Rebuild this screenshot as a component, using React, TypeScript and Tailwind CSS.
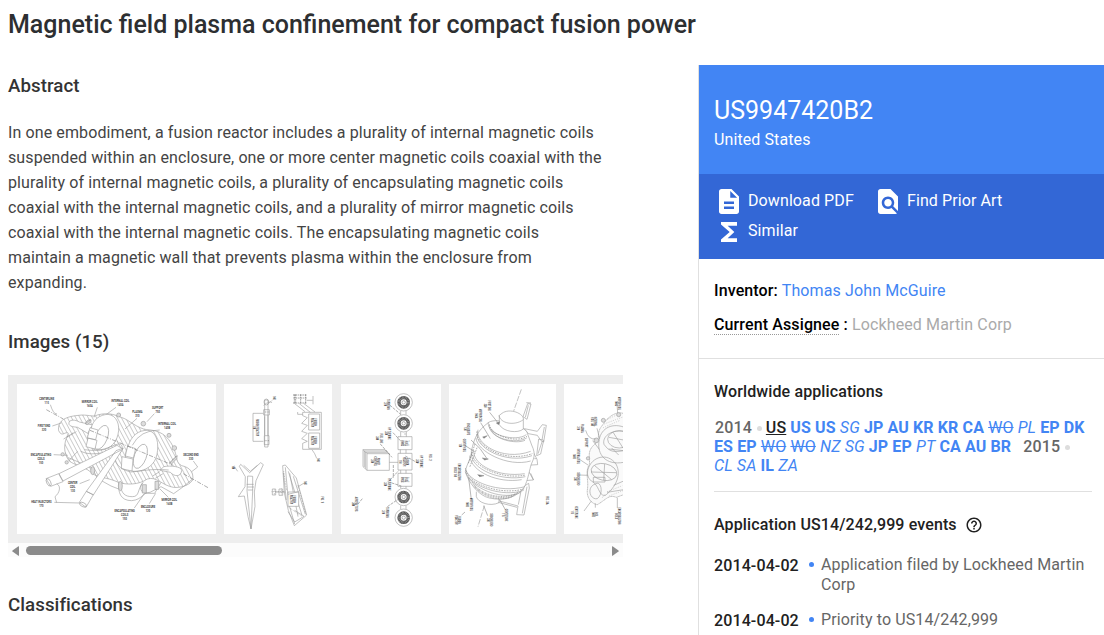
import React from "react";
import { MdHelpOutline } from "react-icons/md";

type Label = [number, number, ...string[]];

// small condensed callouts, upright or turned a quarter like the scanned sheets
function Labels({ items, turned = false, size = 12 }: { items: Label[]; turned?: boolean; size?: number }) {
  return (
    <g fill="#333" stroke="none" fontSize={size} fontWeight="600" textAnchor="middle">
      {items.map(([x, y, ...lines], i) => (
        <g key={i} transform={`translate(${x} ${y})${turned ? " rotate(90)" : ""} scale(0.64 1)`}>
          {lines.map((line, n) => (
            <text key={n} y={n * size + 4}>{line}</text>
          ))}
        </g>
      ))}
    </g>
  );
}

function Sheet({ viewBox, className, children }: { viewBox: string; className: string; children: React.ReactNode }) {
  return (
    <div className={`h-[150px] shrink-0 bg-white tracking-normal ${className}`}>
      <svg viewBox={viewBox} className="h-full w-full" preserveAspectRatio="none" fill="none" stroke="#999" strokeWidth="1.8">
        {children}
      </svg>
    </div>
  );
}

function CutawayFigure() {
  return (
    <Sheet viewBox="51 42 597 450" className="w-[199px]">
      <defs>
        <pattern id="hatch" width="11" height="11" patternUnits="userSpaceOnUse" patternTransform="rotate(-28)">
          <path d="M1 0V11" stroke="#aaa" strokeWidth="2" />
        </pattern>
      </defs>
      <path
        fill="url(#hatch)"
        d="M176 182C172 156 190 140 236 136C262 132 280 143 292 135C330 125 350 137 374 146C400 160 420 180 452 180C490 184 512 208 524 242C532 264 528 278 545 287C570 292 582 308 578 330C566 348 540 354 520 352C485 346 470 318 442 327C416 345 380 345 355 337C320 320 290 325 272 306C246 285 224 287 207 272C190 250 190 220 205 190C196 182 186 204 176 182Z"
      />
      <path fill="#fff" d="M207 163C204 150 221 146 238 156L278 165L263 190L233 172C220 170 212 171 207 163ZM491 290C510 286 546 289 545 302C542 322 523 320 511 307L480 301Z" />
      <g fill="#fff">
        <path d="M273 178C278 148 300 134 324 133C350 136 361 164 354 193C348 222 323 246 286 239C260 232 256 202 273 178Z" />
        <path d="M384 230C394 196 416 180 444 181C472 187 477 221 471 253C465 286 435 306 399 304C374 295 370 254 384 230Z" />
      </g>
      <ellipse cx="304" cy="202" rx="18" ry="38" transform="rotate(22 304 202)" />
      <ellipse cx="421" cy="259" rx="18" ry="38" transform="rotate(20 421 259)" />
      <path fill="#fff" d="M270 173L294 180L287 209L262 204ZM264 204L291 211L285 237L258 230ZM383 228L407 236L400 264L376 258ZM366 260L399 267L396 303L364 296Z" />
      <path d="M242 244C285 265 335 234 354 247C334 271 354 296 392 306C420 304 454 295 506 300M253 239C309 247 323 231 354 222C370 220 371 240 356 254M207 272L233 244M205 263L277 294L292 325L333 348L356 357" />
      <path fill="#fff" d="M138 326L176 311L189 335L152 349ZM177 311L351 226L369 237L189 333ZM238 397L259 364L280 374L258 412ZM259 364L348 242L370 234L280 375Z" />
      <ellipse cx="146" cy="337" rx="6" ry="12" transform="rotate(-26 146 337)" />
      <ellipse cx="249" cy="404" rx="11" ry="6" transform="rotate(26 249 404)" />
      <path strokeDasharray="13 4 3 4" d="M139 119L190 147M270 181L520 286M550 311L624 353" stroke="#777" />
      <path d="M356 337C354 367 361 392 395 392C428 389 428 366 450 367L483 350L521 371L550 350L574 330M360 342C364 371 375 380 397 380C420 380 411 358 429 338M429 337C416 349 422 371 440 370L464 370L483 337M458 318L479 305M466 325L489 311" />
      <path stroke="#999" d="M151 104Q160 133 171 132M292 112L282 142M348 112L322 131M411 145L375 177M463 131L441 155M479 180Q420 180 397 226M157 168L184 159M161 254L203 256M170 398L165 380C178 370 185 349 170 341M163 397L239 399M239 341L269 329M403 414L433 371M448 401L467 370M505 382L479 356M580 273L593 291L575 305" />
      <g fill="#ddd">
        <circle cx="356" cy="135" r="6" /><circle cx="507" cy="196" r="6" /><circle cx="523" cy="234" r="7" />
        <circle cx="430" cy="161" r="7" /><circle cx="188" cy="253" r="5" /><circle cx="200" cy="277" r="5" />
        <ellipse cx="265" cy="156" rx="5" ry="10" transform="rotate(50 265 156)" /><ellipse cx="278" cy="302" rx="6" ry="12" />
        <ellipse cx="361" cy="348" rx="6" ry="14" /><path d="M427 344h12v25h-12zM465 334h11v24h-11zM510 278L532 257L530 266L515 282Z" />
      </g>
      <path stroke="#777" strokeDasharray="4 2" d="M191 207L222 187M202 202L229 185M257 160L273 149M508 279L529 257" />
      <Labels items={[
        [140, 86, "CENTERLINE", "115"], [269, 96, "MIRROR COIL", "160A"], [361, 91, "INTERNAL COIL", "140A"],
        [412, 126, "PLASMA", "310"], [473, 113, "SUPPORT", "750"], [501, 160, "INTERNAL COIL", "140B"],
        [132, 166, "FIRST END", "320"], [123, 253, "ENCAPSULATING", "COILS", "150"], [573, 253, "SECOND END", "330"],
        [218, 339, "CENTER", "COIL", "130"], [124, 395, "HEAT INJECTORS", "170"], [374, 421, "ENCAPSULATING", "COILS", "150"],
        [444, 409, "ENCLOSURE", "120"], [508, 388, "MIRROR COIL", "160B"],
      ]} />
    </Sheet>
  );
}

function VehiclesFigure() {
  return (
    <Sheet viewBox="27 42 324 450" className="mr-px w-[108px]">
      <path d="M145 130H114V214H145M149 90H159V231H149ZM146 119H163V135H146ZM148 197H162V224H148ZM149 139V195M159 136V197" />
      <path strokeDasharray="3 2" stroke="#777" d="M146 106Q165 90 171 99M150 126H163M149 212H162M172 91L157 103" />
      <ellipse cx="154" cy="96" rx="7" ry="9" />
      <path d="M263 127H319V238H263V220L277 214L260 206L277 190L260 184L277 166L260 160L277 143L263 137ZM281 132H314V180H281ZM281 189H314V235H281Z" />
      <path d="M248 126V133H263M239 101L270 125M253 101L286 127M267 101L300 126M275 91H293M294 78V103" />
      <path stroke="#666" strokeDasharray="5 2" d="M234 75H275M235 84H275M234 99H275M242 73V102M257 73V102M272 73V102M238 73V102" />
      <path d="M291 239Q300 250 305 265" />
      <path d="M108 477L99 440L88 378L70 380L90 350L91 320L73 289L77 283L104 308L137 278L145 284L123 332L118 366L120 409ZM98 318L96 362L108 476L113 362L113 319ZM95 343H116M97 351H117M98 360H114M86 286L106 304L127 286" />
      <path d="M59 291L68 304" />
      <path d="M203 287L211 285L244 324L275 435L266 443L238 467L220 421L208 369ZM211 292L221 400L239 462M220 304L261 436M235 319L271 433M224 310L249 440M205 308L214 390M239 421L267 439L239 456L219 425" />
      <path fill="#fff" d="M219 366H251V409H219ZM219 373L251 365M181 366H210M172 357H182V375H172ZM192 357H203V376H192Z" />
      <path strokeDasharray="2 3" stroke="#777" d="M170 365H210M178 359V375M199 356V376M206 304L215 361M249 346L273 433M221 412L260 438" />
      <path d="M269 338L248 351" />
      <Labels turned size={10} items={[
        [128, 172, "FUSION REACTOR", "110"], [178, 84, "100"], [302, 157, "FUSION", "REACTOR"], [302, 211, "FUSION", "REACTOR"],
        [310, 270, "100"], [54, 292, "100"], [271, 339, "100"], [239, 388, "FUSION", "REACTOR"],
      ]} />
      <Labels turned size={11} items={[[321, 389, "FIG.  1"]]} />
    </Sheet>
  );
}

function EngineFigure() {
  return (
    <Sheet viewBox="378 42 300 450" className="w-[100px]">
      {[97, 160, 381, 443].map((y) => (
        <g key={y}>
          <circle cx="566" cy={y} r="26" />
          <circle cx="566" cy={y} r="14" stroke="#555" strokeWidth="10" />
          <circle cx="566" cy={y} r="14" stroke="#bbb" strokeWidth="8" strokeDasharray="1 3" />
          <circle cx="566" cy={y} r="5" stroke="#777" />
        </g>
      ))}
      <path d="M549 200H591V239H549ZM549 250H591V300H549ZM549 310H591V349H549ZM557 186V200M574 186V200M557 123V134M573 123V134M556 239V250M573 239V250M557 300V310M573 300V310M557 349V355M573 349V355M557 407V417M573 407V417" />
      <path fill="#fff" d="M444 239H510L523 252V301H456L444 290ZM444 239L456 251H523M456 251V301M523 277H549M448 243H515M452 247H519M448 243V291M452 247V296" />
      <path stroke="#777" d="M496 222L531 262M534 188L569 226M524 105L557 133M517 410L558 382M524 331L551 302M535 285V323M610 280L571 258M518 335L559 348M442 386L429 402" strokeDasharray="9 3" />
      <path stroke="#777" d="M567 192H573M571 266H577M558 213H584M559 225H584M559 323H584M559 335H584" strokeDasharray="2 2" />
      <Labels turned size={10} items={[
        [520, 103, "TURBOFAN", "210"], [523, 190, "HP TURBINE", "230"], [498, 205, "FUEL LINE", "240"], [573, 220, "FUEL", "PROC"],
        [577, 275, "FUSION", "REACTOR", "110"], [573, 329, "FUEL", "PROC"], [491, 274, "POWER", "CONTROL", "250"], [618, 274, "HP TURBINE", "230"],
        [522, 343, "HP TURBINE", "230"], [516, 427, "TURBOFAN", "210"], [425, 403, "AIRCRAFT SYS.", "200"],
      ]} />
      <Labels turned size={12} items={[[646, 262, "FIG.  2"]]} />
    </Sheet>
  );
}

function ReactorFigure() {
  return (
    <Sheet viewBox="42 42 321 450" className="w-[107px]">
      <path d="M259 58L236 123M148 407L129 470" strokeDasharray="17 4" />
      <path fill="#fff" d="M264 140L278 101L288 102L276 148ZM274 98L288 99M268 176L307 184L322 164L334 166L326 216L318 212L307 196L280 191ZM311 207L326 211L317 252L305 257ZM250 404L260 353L281 340L283 354L267 435L245 434L249 408L193 393" />
      <path d="M328 171L321 210M322 213L309 251M280 106L271 142M276 350L262 430M190 397L246 412M290 237L306 268L308 284L272 286M278 298L295 330L266 332M298 266L304 266M287 310L296 330" />
      <path fill="#fff" d="M161 157C190 140 270 170 276 187L290 225C305 256 294 269 288 285C280 315 279 328 268 351C250 379 210 395 163 384C130 377 100 336 91 305C95 280 112 261 109 243C118 207 124 184 161 157Z" />
      <path d="M160 157C154 195 243 217 274 194M163 169C165 205 243 224 275 204M169 178C178 209 242 223 270 211" />
      <path d="M129 179C118 218 199 276 287 244M127 190C117 230 211 285 291 257M123 204C125 243 218 293 287 273" />
      <path d="M116 241C113 286 191 323 269 311M109 249C106 300 202 335 271 320M104 257C108 306 190 341 260 329" />
      <path d="M91 294C97 335 193 371 270 350M92 306C103 348 203 384 266 361M99 321C124 359 206 393 257 367" />
      <path stroke="#777" strokeDasharray="3 2" d="M111 337C143 381 214 391 250 366M119 351C150 388 210 394 235 378M115 344C145 384 211 392 244 372" />
      <path stroke="#777" strokeDasharray="5 3" d="M163 163C169 199 245 220 276 199M126 184C119 225 207 281 292 251M111 246C110 291 202 330 272 315M93 301C100 342 199 378 269 356M120 222L100 280M126 233L104 292" />
      <path fill="#fff" d="M201 130C222 113 270 130 265 151V177C249 191 205 186 193 164V136Z" />
      <path d="M192 136C195 160 238 169 265 149M124 365V380C129 398 165 411 192 398V387" />
      <g fill="#666"><path d="M184 159L194 155L191 164ZM143 201L157 197L147 205ZM142 264L160 267L149 270ZM128 314L147 317L134 320Z" /></g>
      <path d="M164 127L191 161M137 158L166 206M108 210Q138 233 156 266M89 226L119 245M109 389L101 324M158 437L146 407M211 419L194 389M80 435L90 426" stroke="#888" />
      <Labels turned size={10} items={[
        [162, 107, "FIRST END", "320"], [135, 137, "MIRROR COIL", "160A"], [101, 177, "ENCLOSURE", "120"], [87, 226, "CENTER COIL", "130"],
        [72, 306, "ENCAPSULATING", "COILS 150"], [108, 403, "MIRROR COIL", "160B"], [170, 450, "SECOND END", "330"], [214, 435, "CENTERLINE", "115"],
        [73, 450, "FUSION", "REACTOR"],
      ]} />
      <Labels turned size={12} items={[[337, 391, "FIG.  3A"]]} />
    </Sheet>
  );
}

function SectionFigure() {
  return (
    <Sheet viewBox="387 42 177 450" className="w-[59px]">
      <path strokeDasharray="4 1" fill="#fafafa" d="M564 130C542 123 517 142 502 166C479 193 501 207 480 222C454 244 466 261 463 283C449 308 462 328 457 360C454 387 474 403 487 404C516 387 521 373 544 382L566 374" />
      <path d="M566 171C525 157 495 180 492 214C486 253 512 287 566 277M566 184C525 178 501 202 507 223C523 246 536 247 566 242M459 298C470 260 517 246 543 282C563 320 535 358 510 377C489 376 494 345 469 333C459 324 455 313 459 298Z" />
      <ellipse cx="507" cy="306" rx="39" ry="25" transform="rotate(12 507 306)" />
      <ellipse cx="553" cy="208" rx="35" ry="26" />
      <path d="M479 287L530 329M509 282L506 331M468 306L543 308M522 202L566 210M535 188L564 234M483 341C452 350 465 391 487 386C507 370 498 332 483 341ZM475 322H510V336H475ZM521 237L566 242M530 234L551 255M536 346L566 333M516 367L566 359" />
      <path strokeDasharray="2 4" d="M510 151L545 135M507 162L564 141M505 173L555 151M517 365L562 347M522 378L566 361M501 384L511 372" />
      <g fill="#ddd"><circle cx="505" cy="151" r="6" /><circle cx="551" cy="134" r="6" /><circle cx="459" cy="265" r="5" /><circle cx="484" cy="211" r="7" /></g>
      <path d="M452 181Q460 209 481 207M473 212L493 238M486 175L494 206M546 103L548 129M432 267L459 285M434 315L459 316M469 393L447 423M481 413L481 400M547 414L547 383" />
      <Labels turned size={10} items={[
        [553, 100, "MIRROR COIL", "160A"], [482, 155, "INTERNAL", "COIL 140"], [441, 175, "PLASMA", "310"], [455, 218, "SUPPORT"],
        [429, 259, "INTERNAL COIL", "140B"], [430, 327, "SECOND END", "330"], [423, 427, "CENTERLINE", "115"], [484, 433, "COIL", "160B"], [553, 438, "ENCAPSULATING", "COILS"],
      ]} />
    </Sheet>
  );
}

const links = "text-[#4285f4]";

function Country({ code, kind = "b" }: { code: string; kind?: "b" | "i" | "s" }) {
  if (kind === "i") return <><span className={`${links} italic`}>{code}</span>{" "}</>;
  if (kind === "s") return <><span className={`${links} line-through`}>{code}</span>{" "}</>;
  return <><span className={`${links} font-bold`}>{code}</span>{" "}</>;
}

// "i" = not in force, "s" = ceased
const first: [string, ("b" | "i" | "s")?][] = [
  ["US"], ["US"], ["SG", "i"], ["JP"], ["AU"], ["KR"], ["KR"], ["CA"], ["WO", "s"], ["PL", "i"], ["EP"], ["DK"],
];
const second: [string, ("b" | "i" | "s")?][] = [
  ["ES"], ["EP"], ["WO", "s"], ["WO", "s"], ["NZ", "i"], ["SG", "i"], ["JP"], ["EP"], ["PT", "i"], ["CA"], ["AU"], ["BR"],
];
const third: [string, ("b" | "i" | "s")?][] = [["CL", "i"], ["SA", "i"], ["IL"], ["ZA", "i"]];

const events = [
  { date: "2014-04-02", text: "Application filed by Lockheed Martin Corp" },
  { date: "2014-04-02", text: "Priority to US14/242,999" },
];

const abstractLines = [
  "In one embodiment, a fusion reactor includes a plurality of internal magnetic coils",
  "suspended within an enclosure, one or more center magnetic coils coaxial with the",
  "plurality of internal magnetic coils, a plurality of encapsulating magnetic coils",
  "coaxial with the internal magnetic coils, and a plurality of mirror magnetic coils",
  "coaxial with the internal magnetic coils. The encapsulating magnetic coils",
  "maintain a magnetic wall that prevents plasma within the enclosure from",
  "expanding.",
];

export default function App() {
  return (
    <div className="h-[635px] w-[1104px] overflow-hidden bg-white font-['Roboto',sans-serif] text-base text-[#212121]">
      <h1 className="h-[65px] whitespace-nowrap pl-2 pt-[9px] text-[25px] leading-8 font-medium text-[#2d2f31]">
        Magnetic field plasma confinement for compact fusion power
      </h1>
      <div className="flex h-[570px]">
        <main className="w-[698px] pl-2">
          <h2 className="pt-[9px] text-[18.72px] leading-6 font-medium tracking-[0.05px] text-[#333]">Abstract</h2>
          <p className="mt-[22px] leading-[25px] tracking-[0.11px] whitespace-nowrap text-[#444]">
            {abstractLines.map((line) => (
              <span key={line} className="block">{line}</span>
            ))}
          </p>
          <h2 className="mt-[35px] text-[18.72px] leading-6 font-medium tracking-[0.05px] text-[#333]">Images (15)</h2>
          <div className="mt-[21px] flex h-[168px] w-[615px] gap-2 overflow-hidden bg-[#eee] pt-[9px] pl-[9px]">
            <CutawayFigure />
            <VehiclesFigure />
            <EngineFigure />
            <ReactorFigure />
            <SectionFigure />
          </div>
          <div className="flex h-[14px] w-[615px] items-center bg-[#fcfcfc] px-1">
            <svg viewBox="0 0 8 10" className="mt-px h-[10px] w-2" fill="#8b8b8b"><path d="M7 .5V9.5Q7 10 6.4 9.7L.5 5.5Q0 5 .5 4.5L6.4.3Q7 0 7 .5Z" /></svg>
            <div className="mt-px ml-1.5 h-[9px] w-[196px] rounded-full bg-[#8b8b8b]" />
            <svg viewBox="0 0 8 10" className="mt-px ml-auto h-[10px] w-2" fill="#8b8b8b"><path d="M1 .5V9.5Q1 10 1.6 9.7L7.5 5.5Q8 5 7.5 4.5L1.6.3Q1 0 1 .5Z" /></svg>
          </div>
          <h2 className="mt-9 text-[18.72px] leading-6 font-medium tracking-[0.05px] text-[#333]">Classifications</h2>
        </main>

        <aside className="flex-1 border-l border-[#e0e0e0]">
          <div className="h-[109px] bg-[#4285f4] pt-[31px] pl-[15px] text-white">
            <div className="text-[25px] leading-[30px]">US9947420B2</div>
            <div className="mt-1 leading-5 tracking-[0.1px]">United States</div>
          </div>
          <div className="h-[85px] bg-[#3367d6] pt-3 pl-[15px] tracking-[0.1px] text-white">
            <div className="flex">
              <div className="flex h-[30px] w-[159px] items-center">
                <svg viewBox="4 2 16 20" className="ml-[5px] h-[25px] w-5" fill="currentColor">
                  <path d="M14 2H6c-1.1 0-1.99.9-1.99 2L4 20c0 1.1.89 2 1.99 2H18c1.1 0 2-.9 2-2V8l-6-6zm2 16H8v-2h8v2zm0-4H8v-2h8v2zm-3-5V3.5L18.5 9H13z" />
                </svg>
                <span className="ml-[9px]">Download PDF</span>
              </div>
              <div className="flex h-[30px] items-center">
                <svg viewBox="4 2 16 20" className="ml-[5px] h-[25px] w-5" fill="currentColor">
                  <path d="M20 19.59V8l-6-6H6c-1.1 0-1.99.9-1.99 2L4 20c0 1.1.89 2 1.99 2H18c.45 0 .85-.15 1.19-.4l-4.43-4.43c-.8.52-1.74.83-2.76.83-2.76 0-5-2.24-5-5s2.24-5 5-5 5 2.24 5 5c0 1.02-.31 1.96-.83 2.75L20 19.59zM9 13c0 1.66 1.34 3 3 3s3-1.34 3-3-1.34-3-3-3-3 1.34-3 3z" />
                </svg>
                <span className="ml-[9px]">Find Prior Art</span>
              </div>
            </div>
            <div className="flex h-[30px] items-center">
              <svg viewBox="6 4 12 16" className="mt-0.5 ml-[7px] h-5 w-4" preserveAspectRatio="none" fill="currentColor">
                <path d="M18 4H6v2l6.5 6L6 18v2h12v-3h-7l5-5-5-5h7z" />
              </svg>
              <span className="ml-[11px]">Similar</span>
            </div>
          </div>

          <div className="h-[100px] border-b border-[#e0e0e0] pt-[22px] pl-[15px] tracking-[0.12px]">
            <div className="leading-5">
              <span className="font-medium text-black">Inventor:</span> <span className={links}>Thomas John McGuire</span>
            </div>
            <div className="mt-3.5 leading-5 text-[#aaa]">
              <span className="font-medium text-black">
                <span className="border-b border-dotted border-[#999]">Current Assignee</span> :
              </span>{" "}
              Lockheed Martin Corp
            </div>
          </div>

          <div className="pr-3 pl-[15px] tracking-[0.12px]">
            <div className="h-[133px] border-b border-[#e0e0e0] pt-[23px]">
              <h3 className="leading-5 font-medium">Worldwide applications</h3>
              <div className="mt-4 leading-[19px] whitespace-nowrap">
                <div>
                  <span className="ml-px font-medium text-[#666]">2014</span>
                  <span className="mr-1 ml-[5px] inline-block size-[5px] rounded-full bg-[#ddd] align-middle" />
                  <span className="font-medium text-[#212121] underline">US</span>{" "}
                  {first.map(([code, kind], i) => <Country key={i} code={code} kind={kind} />)}
                </div>
                <div>
                  {second.map(([code, kind], i) => <Country key={i} code={code} kind={kind} />)}
                  <span className="ml-2 font-medium text-[#666]">2015</span>
                  <span className="mr-1 ml-[5px] inline-block size-[5px] rounded-full bg-[#ddd] align-middle" />
                </div>
                <div>{third.map(([code, kind], i) => <Country key={i} code={code} kind={kind} />)}</div>
              </div>
            </div>

            <h3 className="flex items-center pt-[23px] leading-5 font-medium">
              Application US14/242,999 events
              <MdHelpOutline className="ml-2 size-[18px]" />
            </h3>
            {events.map((event) => (
              <div key={event.text} className="mt-5 flex leading-5 last:mt-[15px]">
                <span className="mt-px w-[95px] shrink-0 font-medium">{event.date}</span>
                <span className="mt-[7px] mr-[7px] size-[5px] shrink-0 rounded-full bg-[#4285f4]" />
                <span className="w-[270px] text-[#666]">{event.text}</span>
              </div>
            ))}
          </div>
        </aside>
      </div>
    </div>
  );
}
